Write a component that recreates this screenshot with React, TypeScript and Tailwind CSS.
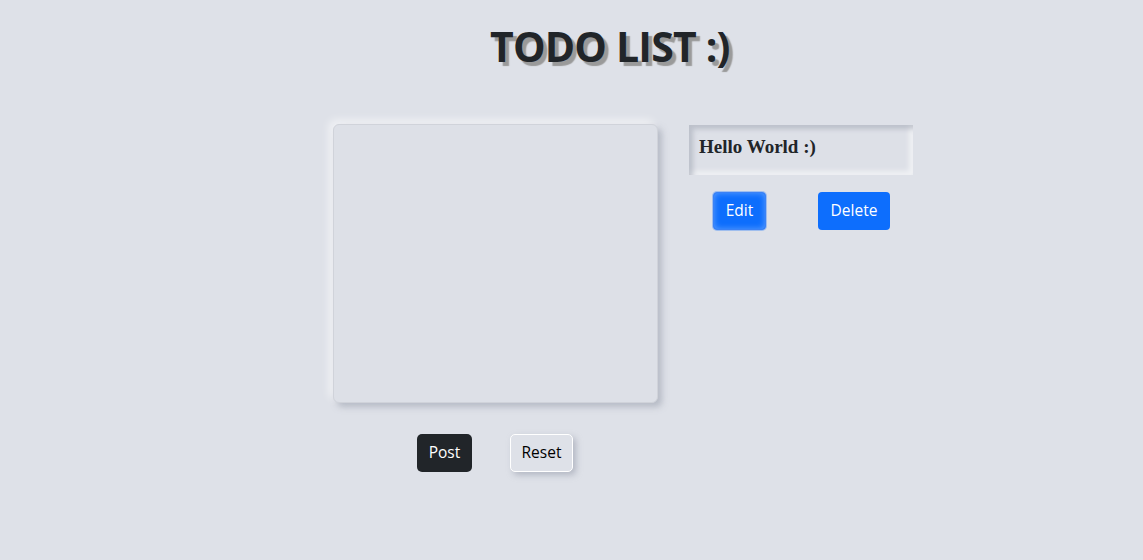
import React from "react";

export default function App() {
  return (
    <div className="min-h-[560px] w-full bg-[#dee1e8] font-['Open_Sans',sans-serif]">
      <h1 className="pt-[22px] pl-[490px] text-[41px] font-bold leading-[48px] tracking-[-0.8px] text-[#212529] [text-shadow:4px_4px_1px_#9a9a9a]">
        TODO LIST :)
      </h1>
      <div className="flex pl-[333px] pt-[54px] gap-[31px]">
        <div className="flex flex-col">
          <div className="w-[325px] h-[279px] rounded-[6px] bg-[#dde0e7] border border-[#d0d3da] shadow-[4px_4px_6px_rgba(150,155,170,0.55),-4px_-4px_8px_rgba(255,255,255,0.6)]" />
          <div className="flex pt-[31px] pl-[84px] gap-[38px]">
            <button className="w-[55px] h-[38px] rounded-[5px] bg-[#212529] text-white text-[15.5px]">
              Post
            </button>
            <button className="w-[63px] h-[38px] rounded-[5px] bg-[#dee1e8] border border-white text-black text-[15.5px] shadow-[3px_3px_6px_rgba(150,155,170,0.6)]">
              Reset
            </button>
          </div>
        </div>
        <div className="flex flex-col pt-px">
          <div className="w-[224px] h-[50px] bg-[#dde0e7] shadow-[inset_4px_4px_5px_rgba(160,165,178,0.55),inset_-4px_-4px_5px_rgba(255,255,255,0.55)] px-[10px] flex items-center">
            <span className="font-['Liberation_Serif',serif] font-bold text-[19px] text-[#212529] -mt-[6px]">
              Hello World :)
            </span>
          </div>
          <div className="flex pt-[17px] pl-[24px] gap-[52px]">
            <button className="w-[53px] h-[38px] rounded-[4px] bg-[#0d6efd] border border-[#3b82f6] text-white text-[15.5px] shadow-[inset_0_0_6px_rgba(255,255,255,0.35),0_0_0_1px_rgba(13,110,253,0.3)]">
              Edit
            </button>
            <button className="w-[72px] h-[38px] rounded-[4px] bg-[#0d6efd] text-white text-[15.5px]">
              Delete
            </button>
          </div>
        </div>
      </div>
    </div>
  );
}
